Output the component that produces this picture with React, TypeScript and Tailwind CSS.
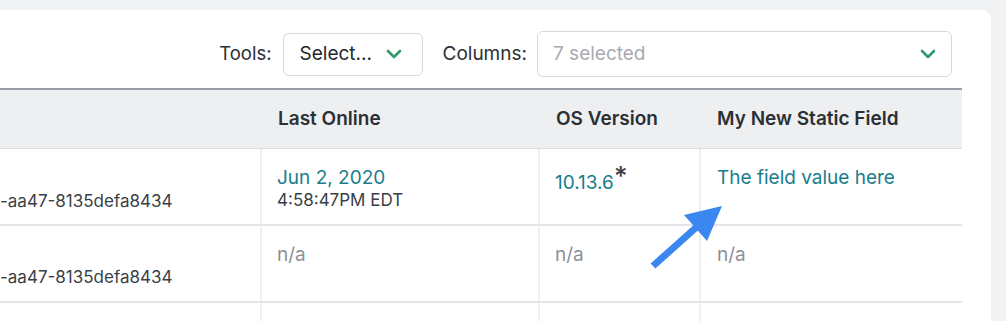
import React from "react";

const Chevron = () => (
  <svg width="16" height="10" viewBox="0 0 16 10" fill="none">
    <path d="M2 2 L8 8 L14 2" stroke="#2f9a6c" strokeWidth="2.6" strokeLinecap="round" strokeLinejoin="round" />
  </svg>
);

export default function App() {
  return (
    <div
      className="w-[1006px] h-[321px] bg-[#f1f2f4] pt-[10px] overflow-hidden"
      style={{ fontFamily: "Inter, 'Liberation Sans', sans-serif" }}
    >
      <div className="relative w-[991px] h-[311px] bg-white rounded-tr-[9px] overflow-hidden">
        {/* toolbar */}
        <div className="flex items-center justify-end pr-[39px] h-[78px] pt-[10px]">
          <span className="text-[18.5px] text-[#2b2f36] mr-[11px]">Tools:</span>
          <div className="w-[140px] h-[43px] border border-[#d6d8dc] rounded-[6px] flex items-center justify-between pl-[16px] pr-[20px]">
            <span className="text-[19px] text-[#23272e]">Select...</span>
            <Chevron />
          </div>
          <span className="text-[19px] text-[#2b2f36] ml-[20px] mr-[10px]">Columns:</span>
          <div className="w-[415px] h-[46px] border border-[#d6d8dc] rounded-[6px] flex items-center justify-between pl-[15px] pr-[15px]">
            <span className="text-[19px] text-[#a7aab0]">7 selected</span>
            <Chevron />
          </div>
        </div>
        {/* table */}
        <div className="w-[962px] border-t-2 border-[#9a9da6]">
          <div className="flex h-[59px] bg-[#eeeff1] border-b border-[#dcdee2] items-center text-[19px] font-semibold text-[#2b2f36]">
            <div className="w-[262px]" />
            <div className="w-[278px] pl-[16px]">Last Online</div>
            <div className="w-[161px] pl-[16px]">OS Version</div>
            <div className="w-[261px] pl-[16px]">My New Static Field</div>
          </div>
          <div className="flex h-[77px] border-b-2 border-[#e4e5e9]">
            <div className="w-[262px] border-r-2 border-[#eeeff1] pt-[41px] text-[17px] leading-[22px] text-[#3a3f47]">-aa47-8135defa8434</div>
            <div className="w-[278px] border-r-2 border-[#eeeff1] pl-[15px] pt-[18px]">
              <div className="text-[19px] leading-[22px] text-[#1a7d8c]">Jun 2, 2020</div>
              <div className="text-[17px] leading-[22px] text-[#3a3f47]">4:58:47PM EDT</div>
            </div>
            <div className="w-[161px] border-r-2 border-[#eeeff1] pl-[15px] pt-[18px] text-[19px] leading-[22px] text-[#1a7d8c]">
              10.13.6<span className="text-[#3a3f47] text-[26px] font-medium relative top-[-4px] leading-none">*</span>
            </div>
            <div className="w-[261px] pl-[16px] pt-[18px] text-[19px] leading-[22px] text-[#1a7d8c]">The field value here</div>
          </div>
          <div className="flex h-[77px] border-b-2 border-[#e4e5e9]">
            <div className="w-[262px] border-r-2 border-[#eeeff1] pt-[40px] text-[17px] leading-[22px] text-[#3a3f47]">-aa47-8135defa8434</div>
            <div className="w-[278px] border-r-2 border-[#eeeff1] pl-[15px] pt-[18px] text-[19px] leading-[22px] text-[#8b9098]">n/a</div>
            <div className="w-[161px] border-r-2 border-[#eeeff1] pl-[15px] pt-[18px] text-[19px] leading-[22px] text-[#8b9098]">n/a</div>
            <div className="w-[261px] pl-[16px] pt-[18px] text-[19px] leading-[22px] text-[#8b9098]">n/a</div>
          </div>
          <div className="flex h-[20px]">
            <div className="w-[262px] border-r-2 border-[#eeeff1]" />
            <div className="w-[278px] border-r-2 border-[#eeeff1]" />
            <div className="w-[161px] border-r-2 border-[#eeeff1]" />
            <div className="w-[261px]" />
          </div>
        </div>
        {/* annotation arrow */}
        <svg className="absolute left-0 top-[-10px] pointer-events-none" width="1006" height="321" viewBox="0 0 1006 321">
          <line x1="653" y1="266" x2="700" y2="224" stroke="#3b87f0" strokeWidth="7" />
          <polygon points="722,206 684,215 707,241" fill="#3b87f0" />
        </svg>
      </div>
    </div>
  );
}
